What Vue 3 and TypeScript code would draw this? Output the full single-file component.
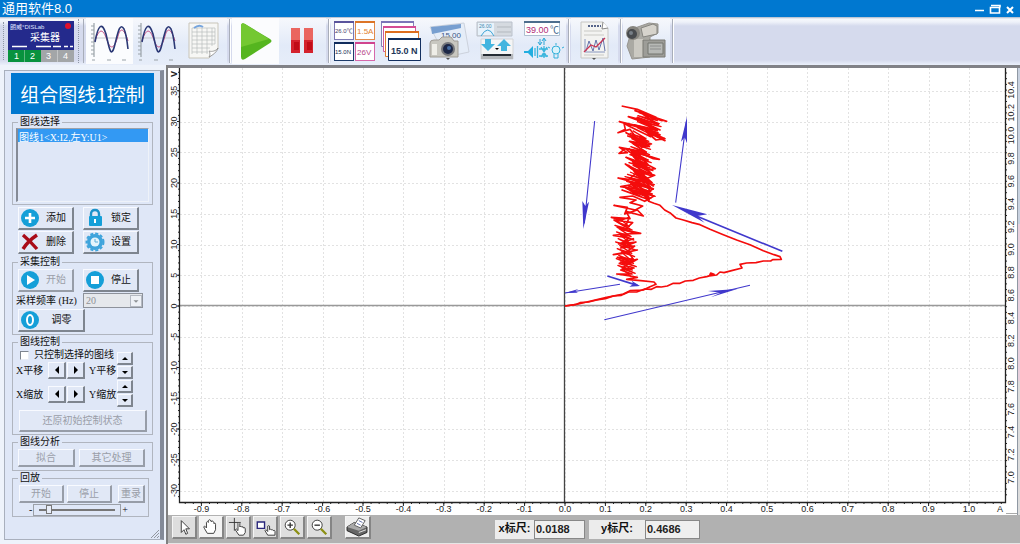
<script setup lang="ts">
import { ref } from 'vue'

const curve = ref('c1')
const rate = ref('20')
const onlySelected = ref(false)
const position = ref(14)
const xRuler = ref('0.0188')
const yRuler = ref('0.4686')

const originX = 565
const originY = 306
const stepX = 40.4
const stepY = 30.75

const xMajor = Array.from({ length: 20 }, (_, i) => i - 9).map((n) => ({
  x: originX + n * stepX,
  label: (n / 10).toFixed(1),
}))
const xMinor = Array.from({ length: 102 }, (_, i) => originX + (i - 47) * (stepX / 5)).filter((x) => x < 1004)
const yMajor = Array.from({ length: 14 }, (_, i) => i - 6).map((n) => ({
  y: originY - n * stepY,
  label: String(n * 5),
}))
const yMinor = Array.from({ length: 70 }, (_, i) => originY + (i - 38) * (stepY / 5)).filter((y) => y < 502)
const rMajor = Array.from({ length: 18 }, (_, i) => ({
  y: 90 + i * 22.8,
  label: (10.4 - i * 0.2).toFixed(1),
}))
const rMinor = Array.from({ length: 76 }, (_, i) => 73 + i * 5.7).filter((y) => y < 500)

const trace =
  '215,48 262,58 318,82 255,62 350,94 268,68 336,92 280,74 325,104 262,82 300,96 235,80 288,100 330,120 270,92 322,122 208,95 280,116 330,134 276,112 345,152 290,126 318,150 345,146 284,118 302,140 236,108 222,100 226,118 204,128 240,118 262,148 228,128 290,158 246,136 298,170 252,144 276,172 300,164 240,154 286,186 208,172 232,188 207,190 226,176 262,204 238,176 284,214 250,180 310,206 328,208 262,188 296,226 228,202 276,228 244,192 290,240 316,236 258,206 304,250 248,216 284,252 226,222 266,252 236,226 288,266 314,256 264,240 306,278 252,244 300,290 204,264 236,268 256,252 310,288 266,262 302,304 212,290 246,284 262,300 240,276 284,312 310,296 258,276 296,320 232,296 276,322 216,300 252,312 298,330 268,302 312,318 284,334 248,318 210,322 258,330 240,338 278,348 256,360 192,346 232,352 224,372 262,360 280,378 228,364 240,386 184,382 214,390 238,382 226,410 192,390 248,398 224,420 202,412 244,424 272,430 226,432 190,436 236,444 218,458 250,446 206,462 258,456 212,474 254,468 226,488 262,480 190,494 236,488 250,508 202,502 240,514 222,530 262,508 208,520 252,534 212,540 246,552 200,552 240,558 262,562 230,568 272,572 312,576 318,583 300,590 280,600 240,602 220,612 170,622 110,636 85,642 45,648'
const loop =
  '284,320 296,334 312,340 330,346 344,360 362,370 378,384 400,390 426,398 450,404 480,418 520,434 560,450 600,464 640,482 672,494 690,500 694,508 668,509 662,513 640,513 618,518 590,519 570,523 576,534 545,542 522,548 510,546 500,555 478,558 482,549 492,553 470,560 448,564 430,571 406,573 390,580 370,580 352,588 334,591 320,590 304,598 284,597 260,606 236,606 214,616 190,618 166,626 140,630 116,636 90,638 76,644 45,648'

/* dense back-and-forth strokes: centre line, start, end, spacing and half width of each band */
function sweep(x: number, from: number, to: number, gap: number, half: number, drift: number) {
  const points: string[] = []
  const count = Math.floor((to - from) / gap)
  for (let i = 0; i <= count; i++) {
    const y = from + i * gap
    const mid = x + (drift * i) / count
    const reach = half + ((i * 7) % 5) * 4 - 8
    points.push(`${mid - reach},${y - 8}`, `${mid + reach},${y + 16}`)
  }
  return points.join(' ')
}
const bands = [
  sweep(298, 76, 128, 9, 32, -12),
  sweep(268, 130, 250, 8, 28, 6),
  sweep(268, 254, 314, 7, 36, 4),
  sweep(224, 394, 550, 10, 22, 6),
]
</script>

<template>
  <div class="app">
    <header class="titlebar">
      <h1>通用软件8.0</h1>
      <div class="winbtns">
        <button aria-label="最小化"><svg viewBox="0 0 12 12"><path d="M1 7.5h9" stroke="#fff" stroke-width="1.5" /></svg></button>
        <button aria-label="还原"><svg viewBox="0 0 12 12"><path d="M1.5 4.5h9v5.500h-9zM2 2.500h9v2" stroke="#fff" fill="none" stroke-width="1.6" /></svg></button>
        <button aria-label="关闭"><svg viewBox="0 0 12 12"><path d="M3 4l6 6M9 4l-6 6" stroke="#fff" stroke-width="2" /></svg></button>
      </div>
    </header>

    <nav class="toolbar">
      <span class="grip"></span>
      <button class="device" aria-label="采集器">
        <svg viewBox="0 0 66 41">
          <rect width="66" height="30" fill="#242a8c" /><text x="2" y="8" font-size="6" fill="#dfe3ff">朗威°DISLab</text>
          <circle cx="60" cy="5" r="3" fill="#e0102c" /><text x="22" y="20" font-size="10" fill="#fff">采集器</text>
          <path d="M4 25.5h15M28 25.5h15M45 25.5h8M56 25.5h4M62 25.5h3" stroke="#fff" stroke-width="1.4" />
          <rect y="29" width="33" height="12" fill="#08923e" /><rect x="33" y="29" width="33" height="12" fill="#a3a6a8" />
          <path d="M16.500 29v12M49.500 29v12" stroke="#fff" stroke-opacity=".35" />
          <g font-size="9" fill="#fff"><text x="6" y="38">1</text><text x="22" y="38">2</text><text x="38" y="38">3</text><text x="55" y="38">4</text></g>
        </svg>
      </button>
      <span class="sep double"></span>
      <button v-for="n in 2" :key="n" class="tool" :class="{ active: n === 1 }" :aria-label="n === 1 ? '示波' : '组合图线'">
        <svg viewBox="0 0 47 44">
          <path d="M8 3v34M5 6h3M5 10h3M5 14h3M5 18h3M5 22h3M5 26h3M5 30h3M5 34h3M6 40h3M21 40h4M36 40h4" stroke="#9aa2a8" fill="none" stroke-width="1.2" />
          <path d="M8 18h34" stroke="#c5c9cf" /><path d="M9 21C13 8 17 8 21 20S29 27 32 16 39 11 42 21" fill="none" stroke="#c2457c" stroke-width="1" />
          <path d="M9 22C12 5 16 1 20 14 23 27 25 41 29 24 32 12 34 2 38 9 40 13 41 20 42 29" fill="none" stroke="#2b3875" stroke-width="1.6" />
        </svg>
      </button>
      <button class="tool" aria-label="数据表格">
        <svg viewBox="0 0 47 44">
          <path d="M9 3h29v26l-9 9H9z" fill="#f7f7f5" stroke="#c9c5b9" /><path d="M12 8h23M12 12h23M12 16h23M12 20h23M12 24h23M12 28h18M12 32h16M12 8v26M17 8v26M22 8v26M27 8v26M32 8v18M35 8v16" stroke="#b8bbbd" stroke-width=".7" fill="none" />
          <path d="M14 8q5-4 9-1" stroke="#75a4dd" stroke-width="2" fill="none" /><path d="M29 37c2-3 0-6 0-6 3 1 7 0 9-3-1 4-5 7-9 9z" fill="#fff" stroke="#888" stroke-width=".8" />
        </svg>
      </button>
      <span class="sep"></span>
      <button class="tool active" aria-label="运行">
        <svg viewBox="0 0 47 44"><path d="M9 6q0-4 4-2l25 15q3 2 0 4L13 39q-4 2-4-2z" fill="#55b51f" /><path d="M9 6q0-4 4-2l24 15-28 8z" fill="#74c832" /></svg>
      </button>
      <button class="tool" aria-label="暂停">
        <svg viewBox="0 0 47 44"><path d="M12 8h9v25h-9zM25 8h9v25h-9z" fill="#d4222d" /><path d="M12 8h9v12h-9zM25 8h9v12h-9z" fill="#ea655f" /><path d="M15 22h5v8h-5zM28 22h5v8h-5z" fill="#c10b17" /></svg>
      </button>
      <span class="sep"></span>
      <button class="tool" aria-label="数字窗口">
        <svg viewBox="0 0 47 44">
          <g fill="#fff" stroke-width="1"><rect x="3.500" y="1.500" width="19" height="18" stroke="#7b77b3" /><rect x="24.500" y="1.500" width="19" height="18" stroke="#e18a4a" /><rect x="3.500" y="22.500" width="19" height="18" stroke="#1d3c6b" /><rect x="24.500" y="22.500" width="19" height="18" stroke="#d668ab" /></g>
          <path d="M3 2h20" stroke="#5a549c" stroke-width="2" /><path d="M24 2h20" stroke="#dc7426" stroke-width="2" /><path d="M3 23h20" stroke="#102c5c" stroke-width="2" /><path d="M24 23h20" stroke="#d0448e" stroke-width="2" />
          <g font-size="6"><text x="4" y="13" fill="#46416a">26.0℃</text><text x="26" y="14" font-size="8" fill="#e28330">1.5A</text><text x="4" y="34" fill="#152c52">15.0N</text><text x="26" y="35" font-size="8" fill="#b8488b">26V</text></g>
        </svg>
      </button>
      <button class="tool" aria-label="层叠窗口">
        <svg viewBox="0 0 47 44"><g fill="#fff"><path d="M3.500 2.500h32v24h-32z" stroke="#8581b8" /><path d="M5.500 7.500h32v24h-32z" stroke="#ce5c9e" /><path d="M7.500 12.500h33v24h-33z" stroke="#e07c32" /><path d="M10.500 18.500h32v22h-32z" stroke="#122f60" /></g><path d="M3 2h33" stroke="#7b75b8" stroke-width="2" /><path d="M5 7h33" stroke="#d44c94" stroke-width="2" /><path d="M7 12h34" stroke="#de6e1f" stroke-width="2" /><path d="M10 19h33" stroke="#102c5c" stroke-width="2" /><text x="13" y="34" font-size="9" font-weight="700" fill="#233557">15.0 N</text></svg>
      </button>
      <button class="tool" aria-label="拍照">
        <svg viewBox="0 0 47 44"><path d="M5 7l34-4 5 29-23 5z" fill="#e5edf8" stroke="#ccd2dc" /><path d="M6 7l30-3v4L7 14z" fill="#789fd0" /><text x="16" y="18" font-size="8" fill="#3a5685">15.00</text><path d="M5 23q0-3 4-3h5l3-3h9l3 4h4v16H5z" fill="#c8c7c0" stroke="#a09c95" /><path d="M7 24h5v11H7z" fill="#efeee8" /><circle cx="23" cy="29" r="7" fill="#75777b" /><circle cx="23" cy="29" r="5" fill="#1d2847" /><circle cx="24" cy="28" r="2" fill="#4870a5" /><path d="M21 38h4l-2 2z" fill="#555" /></svg>
      </button>
      <button class="tool" aria-label="数据传输">
        <svg viewBox="0 0 47 44"><path d="M5 2h35v14H5z" fill="#d5dae0" stroke="#bac1cb" /><path d="M6 3h16v12H6z" fill="#e7f2fb" /><path d="M25 7h14M25 12h14" stroke="#b3b9bf" /><text x="7" y="8" font-size="5" fill="#4388ad">26.00</text><path d="M9 16q7-12 13 0" fill="none" stroke="#3ba3d5" /><path d="M9 19h32v20H9z" fill="#f4f5f6" stroke="#d2d4d7" /><path d="M13 19h6v5h4l-7 7-7-7h4zM29 31h6v-5h4l-7-7-7 7h4z" fill="#44b5df" /><path d="M9 34h32v5H9z" fill="#b4b7bb" /><path d="M11 35h28" stroke="#252b33" stroke-width="2" /><path d="M23 28h4l-2 2z" /></svg>
      </button>
      <button class="tool" aria-label="控制输出">
        <svg viewBox="0 0 47 44"><path d="M5.500 2.500h35v13h-35z" fill="#fff" stroke="#aebfd0" /><path d="M5 2h36" stroke="#4d6d8d" stroke-width="2" /><text x="7" y="13" font-size="9" fill="#b02c77">39.00</text><text x="31" y="13" font-size="9" fill="#355d85">℃</text><path d="M21 19v5M19 22l2 3 2-3M25 25v-6M23 21l2-3 2 3" stroke="#2aa6d6" fill="none" /><path d="M5 31h4l5-5v12l-5-5H5z" fill="#22aee0" /><path d="M16 28v8M18.500 26v12M20 29h9M20 36h9M22 27l6 10M28 27l-6 10M25 26v12" stroke="#3bb5dd" stroke-width="1.3" /><circle cx="37" cy="30" r="4" fill="#d9f2fb" stroke="#33afd9" /><path d="M35 34v4h4v-4M31 28l-2-1M43 28l2-1M37 25v-2" stroke="#33afd9" fill="none" /></svg>
      </button>
      <span class="sep"></span>
      <button class="tool" aria-label="实验报告">
        <svg viewBox="0 0 47 44"><path d="M10 2h22l5 6v30H10z" fill="#f3f3f1" stroke="#c7c7c4" /><path d="M32 2l-1 7 6-1" fill="#fff" stroke="#888" /><path d="M17 6h13" stroke="#56648a" stroke-width="2" stroke-dasharray="2 1" /><path d="M13 11h18M13 15h20M13 35h20" stroke="#c9c9c5" /><path d="M14 19v13h20" stroke="#8896bd" fill="none" /><path d="M15 31l3-10 4 10 3-11 3 10 4-12 2 13" fill="none" stroke="#6372ab" /><path d="M13 32l7-7 5 2 9-9" fill="none" stroke="#ca3352" stroke-width="1.300" /><path d="M21 38h4l-2 2z" fill="#555" /></svg>
      </button>
      <span class="sep"></span>
      <button class="tool" aria-label="录像">
        <svg viewBox="0 0 47 44"><path d="M9 9L26 3l9 1v9l-8 4v20l-18 2-5-13z" fill="#aaa9a3" stroke="#979590" /><path d="M11 19h15v18H11z" fill="#cbc9c2" /><circle cx="10" cy="13" r="7" fill="#87857f" /><circle cx="9" cy="14" r="5" fill="#474a4e" /><circle cx="8" cy="13" r="2" fill="#777f87" /><path d="M18 8l12-4 4 2v8l-14 3z" fill="#d6d3cc" stroke="#868580" /><path d="M20 20h22v17H20z" fill="#9d9d98" stroke="#7a7a75" /><path d="M25 23h15v11H25z" fill="#b7b9b6" stroke="#72746f" /><path d="M27 26h11M27 29h11" stroke="#8c8e8d" /></svg>
      </button>
      <span class="sep"></span>
    </nav>

    <div class="body">
      <aside class="side">
        <div class="panel">
          <h2>组合图线1控制</h2>
          <fieldset>
            <legend>图线选择</legend>
            <select v-model="curve" class="list" size="4" aria-label="图线选择"><option value="c1">图线1&lt;X:I2,左Y:U1&gt;</option></select>
          </fieldset>

          <div class="pairs">
            <button class="btn icon"><svg viewBox="0 0 20 20"><circle cx="10" cy="10" r="9" fill="#159fd8" /><path d="M10 5v10M5 10h10" stroke="#fff" stroke-width="2.600" /></svg><span>添加</span></button>
            <button class="btn icon"><svg viewBox="0 0 20 20"><path d="M6 9V6q0-4 4-4t4 4v3" stroke="#1b92ca" stroke-width="2.400" fill="none" /><rect x="4" y="8" width="13" height="10" rx="1" fill="#159fd8" /><path d="M10 11v4" stroke="#fff" stroke-width="2" /></svg><span>锁定</span></button>
            <button class="btn icon"><svg viewBox="0 0 20 20"><path d="M3 3q7 6 14 14M17 3Q8 9 3 17" stroke="#a90b17" stroke-width="3.400" fill="none" /></svg><span>删除</span></button>
            <button class="btn icon"><svg viewBox="0 0 20 20"><circle cx="10" cy="10" r="6" fill="none" stroke="#3fa4dc" stroke-width="4" /><circle cx="10" cy="10" r="8.500" fill="none" stroke="#3fa4dc" stroke-width="2" stroke-dasharray="3 2" /><circle cx="10" cy="10" r="4.500" fill="#e4f4fc" /><path d="M10 7v3h3" stroke="#5badd9" fill="none" /></svg><span>设置</span></button>
          </div>

          <fieldset>
            <legend>采集控制</legend>
            <div class="pairs inner">
              <button class="btn icon" disabled><svg viewBox="0 0 20 20"><circle cx="10" cy="10" r="9" fill="#159fd8" /><path d="M7 5v10l8-5z" fill="#fff" /></svg><span>开始</span></button>
              <button class="btn icon"><svg viewBox="0 0 20 20"><circle cx="10" cy="10" r="9" fill="#159fd8" /><path d="M6 6h8v8H6z" fill="#fff" /></svg><span>停止</span></button>
            </div>
            <div class="rate">
              <label for="rate">采样频率 (Hz)</label>
              <div class="combo"><select id="rate" v-model="rate" disabled><option>20</option></select><svg viewBox="0 0 12 12"><path d="M3 5h6L6 8z" fill="#8d9094" /></svg></div>
            </div>
            <button class="btn icon zero"><svg viewBox="0 0 20 20"><circle cx="10" cy="10" r="9" fill="#159fd8" /><ellipse cx="10" cy="10" rx="3" ry="5" stroke="#fff" stroke-width="2" fill="none" /></svg><span>调零</span></button>
          </fieldset>

          <fieldset>
            <legend>图线控制</legend>
            <div class="move">
              <div class="moveleft">
                <label class="check"><input v-model="onlySelected" type="checkbox" />只控制选择的图线</label>
                <div v-for="k in ['平移', '缩放']" :key="k" class="axisrow">
                  <span>X{{ k }}</span>
                  <span class="lr"><button class="btn" :aria-label="`X${k}向左`"><svg viewBox="0 0 8 8"><path d="M6 0v8L2 4z" /></svg></button><button class="btn" :aria-label="`X${k}向右`"><svg viewBox="0 0 8 8"><path d="M2 0v8l4-4z" /></svg></button></span>
                  <span>Y{{ k }}</span>
                </div>
              </div>
              <div class="spins">
                <template v-for="k in ['平移', '缩放']" :key="k">
                  <button class="btn" :aria-label="`Y${k}向上`"><svg viewBox="0 0 8 8"><path d="M1 6h6L4 3z" /></svg></button>
                  <button class="btn" :aria-label="`Y${k}向下`"><svg viewBox="0 0 8 8"><path d="M1 3h6L4 6z" /></svg></button>
                </template>
              </div>
            </div>
            <button class="btn reset" disabled>还原初始控制状态</button>
          </fieldset>

          <fieldset>
            <legend>图线分析</legend>
            <div class="analysis"><button class="btn" disabled>拟合</button><button class="btn" disabled>其它处理</button></div>
          </fieldset>

          <fieldset class="replay">
            <legend>回放</legend>
            <div class="playrow"><button class="btn" disabled>开始</button><button class="btn" disabled>停止</button><button class="btn" disabled>重录</button></div>
            <div class="slide"><span>-</span><input v-model="position" type="range" min="0" max="100" aria-label="回放进度" /><span>+</span></div>
          </fieldset>
          <svg class="corner" viewBox="0 0 10 10"><path d="M1 9l8-8M4 9l5-5M7 9l2-2" stroke="#92979f" /></svg>
        </div>
      </aside>

      <main class="work">
        <div class="plotwrap">
          <svg class="plot" viewBox="168 68 849 447" role="img" aria-label="组合图线">
            <rect x="168" y="68" width="849" height="447" fill="#fff" />
            <g stroke="#e2e2e2" stroke-dasharray="2 2">
              <path v-for="m in xMajor" :key="m.label" :d="`M${Math.round(m.x) + 0.5} 68V502`" />
              <path v-for="m in yMajor" :key="m.label" :d="`M180 ${Math.round(m.y) + 0.5}H1005`" />
            </g>
            <path d="M180 305.500H1005" stroke="#999" stroke-width="1.500" />
            <path d="M564.500 68V502" stroke="#444" stroke-width="1.300" />
            <path d="M179.500 68V502.500H1005.500V68" fill="none" stroke="#222" stroke-width="1.300" />
            <g stroke="#222">
              <path v-for="(x, i) in xMinor" :key="i" :d="`M${x} 502v2`" />
              <path v-for="m in xMajor" :key="m.label" :d="`M${m.x} 502v4`" />
              <path v-for="(y, i) in yMinor" :key="i" :d="`M178 ${y}h2`" />
              <path v-for="m in yMajor" :key="m.label" :d="`M177 ${m.y}h3`" />
              <path v-for="(y, i) in rMinor" :key="i" :d="`M1005 ${y}h2`" />
            </g>
            <g class="ticks" text-anchor="middle">
              <text v-for="m in xMajor" :key="m.label" :x="m.x" y="512">{{ m.label }}</text>
              <text x="1000" y="512">A</text>
              <text v-for="m in yMajor" :key="m.label" :transform="`translate(177 ${m.y}) rotate(-90)`">{{ m.label }}</text>
              <text transform="translate(177 74) rotate(-90)" font-weight="bold">V</text>
              <text v-for="m in rMajor" :key="m.label" :transform="`translate(1014 ${m.y}) rotate(-90)`">{{ m.label }}</text>
            </g>
            <g transform="translate(550 90) scale(.33333)">
              <g fill="none" stroke="#f40c0c" stroke-width="5" stroke-linejoin="round"><polyline :points="trace" /><polyline :points="loop" /><polyline v-for="(band, i) in bands" :key="i" :points="band" stroke-width="4" /></g>
              <g stroke="#4038cc" stroke-width="3.200"><path d="M134 93L103 400M377 338L409 95M163 689L600 586M210 583L45 609" /><path d="M697 484L430 374M172 558L262 586" stroke-width="5" /></g>
              <g fill="#4038cc"><path d="M100 417L97 333 106 348 117 335zM411 80L393 155 404 142 411 160zM366 345L472 373 442 378 464 398zM562 597L474 603 512 608 482 622zM270 588L245 572 250 582 238 590zM45 609L85 597 75 604 84 608z" /></g>
            </g>
            <path d="M1006 513.500h11" stroke="#aaa" />
          </svg>
          <span class="edge"></span>
        </div>
        <footer class="bar">
          <button aria-label="选择"><svg viewBox="0 0 24 22"><path d="M9 4v13l3-3 2 5 2-1-2-5h4z" fill="#fff" stroke="#333" /></svg></button>
          <button class="on" aria-label="移动"><svg viewBox="0 0 24 22"><path d="M8 18l-3-5q-2-3 0-3l2 2V6q1-2 2 0V4q1-2 3 0v1q2-2 3 1v1q2-1 2 1v6l-2 4z" fill="#fff" stroke="#333" /></svg></button>
          <button aria-label="读点"><svg viewBox="0 0 24 22"><path d="M8 1v14M2 6h13" stroke="#333" /><path d="M13 20l-4-6 1-1 2 2V7q1-2 2 0v4q1-2 2 0 2-1 2 1 2-1 2 1v4l-2 3z" fill="#fff" stroke="#333" /></svg></button>
          <button aria-label="框选"><svg viewBox="0 0 24 22"><path d="M3.500 5.500h8v7h-8z" fill="#fff" stroke="#29267b" stroke-width="1.500" /><path d="M15 20l-3-5 1-1 2 2v-6q1-1 2 0v4q1-1 2 0 1-1 2 1 2-1 2 1v4z" fill="#fff" stroke="#333" /></svg></button>
          <button aria-label="放大"><svg viewBox="0 0 24 22"><circle cx="10" cy="9" r="5.500" fill="#fff" stroke="#333" /><path d="M7 9h6M10 6v6" stroke="#333" stroke-width="1.500" /><path d="M14 13l6 6" stroke="#8b8f12" stroke-width="2.500" /></svg></button>
          <button aria-label="缩小"><svg viewBox="0 0 24 22"><circle cx="10" cy="9" r="5.500" fill="#fff" stroke="#333" /><path d="M7 9h6" stroke="#333" stroke-width="1.500" /><path d="M14 13l6 6" stroke="#8b8f12" stroke-width="2.500" /></svg></button>
          <button class="print" aria-label="打印"><svg viewBox="0 0 24 22"><path d="M1 11l8-5 14 5v6l-9 4-13-6z" fill="#666" stroke="#222" /><path d="M1 11l8-5 14 5-9 4z" fill="#aaa" /><path d="M9 9l5-8 7 3-5 8z" fill="#fff" stroke="#555" /><path d="M14 4l4 2M12 7l4 2" stroke="#5767a6" /><path d="M14 17l8-3" stroke="#eee" /></svg></button>
          <div class="ruler"><label class="first" for="xr">x标尺:</label><input id="xr" v-model="xRuler" class="xr" /><label class="second" for="yr">y标尺:</label><input id="yr" v-model="yRuler" class="yr" /></div>
        </footer>
      </main>
    </div>
  </div>
</template>

<style>
body { margin: 0; }
</style>

<style scoped>
.app, .app * { box-sizing: border-box; }
.app {
  min-height: 100vh;
  display: flex;
  flex-direction: column;
  background: #dfe3ea;
  color: #111;
  font-family: "Liberation Serif", "Noto Sans CJK SC", sans-serif;
  font-size: 10px;
  line-height: 12px;
}
button { font: inherit; color: inherit; padding: 0; margin: 0; border: 0; background: none; }
svg { display: block; }
.titlebar { height: 17px; background: #0078d0; display: flex; align-items: center; justify-content: space-between; padding: 0 4px 0 2px; }
h1 { margin: 0; color: #fff; font: 400 13px/17px "Liberation Sans", "Noto Sans CJK SC", sans-serif; }
.winbtns { display: flex; gap: 3px; }
.winbtns svg { width: 12px; height: 12px; }
.toolbar { height: 48px; display: flex; align-items: center; padding-left: 3px; background: linear-gradient(#aab6c8 0, #f6f8fc 2px, #eef1f9 5px, #d5daed 9px, #d5daed 43px, #eaf0fb 48px); font-family: "Liberation Sans", "Noto Sans CJK SC", sans-serif; }
.toolbar text { font-family: "Liberation Sans", "Noto Sans CJK SC", sans-serif; }
.grip { width: 2px; height: 38px; margin-right: 3px; border-left: 1px dotted #8d96a5; }
.device svg { width: 66px; height: 41px; }
.sep { width: 2px; height: 44px; margin: 0 1px 0 2px; border-left: 1px solid #a8adb9; border-right: 1px solid #fff; flex: none; }
.sep.double { width: 6px; margin: 0 2px 0 4px; border-left: 1px dotted #8d96a5; border-right: 1px solid #a8adb9; }
.tool { width: 47px; height: 46px; padding-top: 2px; flex: none; background: linear-gradient(#f6f8fc, #e2eaf8 60%, #e6edf9); }
.tool svg { width: 47px; height: 44px; }
.tool.active { background: #fbfcfe; }
.body { flex: 1; display: flex; align-items: stretch; }
.side { width: 168px; flex: none; display: flex; padding: 5px 4px 5px 4px; background: linear-gradient(90deg, #eef3fb 0, #eef3fb 166px, #808080 166px, #808080 168px); }
.panel { flex: 1; min-width: 0; position: relative; padding: 2px 6px 21px 6px; background: #dfe7f7; border: 1px solid #a9b0bd; border-right: 4px solid #838a98; }
h2 { margin: 0 0 2px; height: 41px; background: #0078d0; color: #fff; text-align: center; white-space: nowrap; font: 400 19px/41px "Noto Sans CJK SC", sans-serif; }
fieldset { min-width: 0; margin: 0 1px 1px; padding: 0 3px 2px; border: 1px solid #b0b5bf; }
legend { padding: 0 2px; margin-left: 2px; height: 12px; line-height: 12px; }
.list { display: block; width: 100%; height: 74px; padding: 0; border: 1px solid #9ca1aa; border-right-color: #eef2f9; border-bottom-color: #eef2f9; border-left: 2px solid #858b96; background: #dfe7f7; font: inherit; overflow: hidden; border-radius: 0; outline: 0; }
.list option { padding: 0 1px; min-height: 0; height: 13px; line-height: 13px; font-size: 10px; }
.list option:checked { background: linear-gradient(#3399f3, #3399f3); color: #fff; -webkit-text-fill-color: #fff; }
.btn { background: #e1e8f6; border: 1px solid #f8faff; border-right: 2px solid #7e858f; border-bottom: 2px solid #7e858f; display: flex; align-items: center; justify-content: center; overflow: hidden; }
.btn:disabled { color: #9a9ea8; border-right-color: #979da8; border-bottom-color: #979da8; }
.pairs { display: grid; grid-template-columns: 56px 56px; gap: 1px 9px; margin: 2px 0 2px 7px; }
.pairs.inner { margin: 1px 0 0 2px; }
.icon { height: 23px; justify-content: flex-start; padding-left: 1px; }
.icon svg { width: 20px; height: 20px; flex: none; }
.icon span { flex: 1; text-align: center; }
.rate { display: flex; align-items: center; height: 17px; white-space: nowrap; }
.rate label { width: 67px; flex: none; }
.combo { display: flex; align-items: center; width: 60px; height: 15px; background: #e5e8ec; border: 1px solid #8d929b; }
.combo select { flex: 1; min-width: 0; height: 13px; padding: 0 2px; border: 0; appearance: none; background: none; font: inherit; color: #8e9196; opacity: 1; }
.combo svg { width: 12px; height: 12px; background: #eef1f6; border: 1px solid #b4b9c2; }
.zero { width: 67px; margin-left: 2px; height: 23px; }
.move { display: flex; gap: 1px; height: 62px; }
.moveleft { flex: 1; min-width: 0; }
.check { display: flex; align-items: center; height: 14px; gap: 5px; padding-left: 4px; white-space: nowrap; }
.check input { appearance: none; width: 9px; height: 9px; margin: 0; background: #fff; border: 1px solid #7e858f; border-right-color: #e8ecf5; border-bottom-color: #e8ecf5; }
.axisrow { display: flex; align-items: center; height: 17px; margin-bottom: 7px; white-space: nowrap; }
.axisrow > span:first-child { width: 32px; flex: none; }
.lr { display: flex; gap: 1px; width: 41px; flex: none; }
.lr .btn { width: 18px; height: 17px; }
.btn > svg[viewBox="0 0 8 8"] { width: 8px; height: 8px; }
.spins { width: 16px; margin: 4px 16px 0 0; display: grid; grid-auto-rows: 13px; gap: 1px; align-content: start; }
.reset { width: 128px; height: 22px; margin-left: 3px; }
.analysis { display: flex; gap: 4px; padding: 1px 2px; }
.analysis .btn { width: 57px; height: 18px; }
.analysis .btn + .btn { width: 66px; }
.replay { margin-right: 5px; padding-bottom: 0; }
.playrow { display: flex; gap: 3px; padding: 1px 0 0 3px; }
.playrow .btn { width: 45px; height: 18px; flex: none; }
.playrow .btn:last-child { width: 27px; margin-left: 3px; }
.slide { display: flex; align-items: center; height: 13px; padding-left: 13px; gap: 1px; }
.slide input { appearance: none; width: 88px; height: 12px; margin: 0; border: 1px solid #9ba0a8; background: linear-gradient(#777, #777) center / 76px 2px no-repeat; }
.slide input::-webkit-slider-thumb { appearance: none; width: 6px; height: 9px; background: #e8edf8; border: 1px solid #777; }
.corner { position: absolute; right: 0; bottom: 0; width: 10px; height: 10px; }
.work { flex: 1; min-width: 0; display: flex; flex-direction: column; background: #b1b1b1; }
.plotwrap { display: flex; border-top: 3px solid #818287; }
.plot { flex: 1; min-width: 0; width: 100%; height: auto; }
.edge { width: 3px; border-left: 1px solid #8f98a3; background: linear-gradient(#c8d1df 0 35%, #e8cfdd 35% 70%, #dcdcdc 70%); }
.ticks { font: 9px "Liberation Sans", sans-serif; fill: #222; }
.bar { flex: 1; min-height: 29px; display: flex; align-items: flex-start; gap: 2px; padding: 1px 0 0 4px; border-bottom: 2px solid #e6e6e6; }
.bar > button { width: 25px; height: 23px; flex: none; background: #dedede; border: 1px solid #f5f5f5; border-right: 2px solid #858585; border-bottom: 2px solid #858585; }
.bar > button.on { background: #f3f3f3; }
.bar > button svg { width: 22px; height: 20px; }
.bar > button.print { margin-left: 11px; width: 26px; background: #eee; }
.ruler { display: flex; height: 19px; margin: 4px 0 0 122px; font: 700 11px/17px "Liberation Sans", "Noto Sans CJK SC", sans-serif; }
.ruler label { background: #ececec; text-align: center; }
.ruler .first { width: 39px; }
.ruler .second { width: 56px; margin-left: 4px; }
.ruler input { font: inherit; color: #222; background: #efefef; border: 1px solid #888; padding: 0 1px; margin: 0; border-radius: 0; }
.ruler .xr { width: 51px; }
.ruler .yr { width: 55px; }
</style>
